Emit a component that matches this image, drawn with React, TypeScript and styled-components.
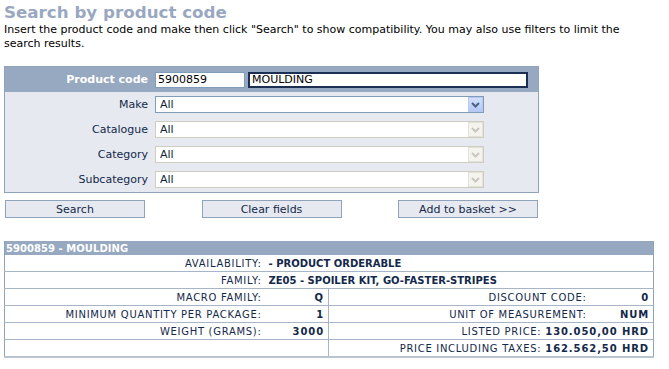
import styled, { createGlobalStyle } from "styled-components";

const GlobalStyle = createGlobalStyle`
    body {
        margin: 0;
        background: #ffffff;
        font-family: "DejaVu Sans", Verdana, sans-serif;
        color: #0e1f3c;
    }
`

const Page = styled.div`
    padding: 0 4px;
    width: 650px;
`

const Title = styled.h1`
    margin: 0;
    padding-top: 1px;
    font-size: 16.7px;
    line-height: 22px;
    font-weight: bold;
    color: #99a8c0;
`

const Intro = styled.p`
    margin: 0;
    font-size: 11px;
    line-height: 14px;
    color: #000;
    width: 640px;
`

const FormPanel = styled.div`
    margin-top: 15px;
    width: 533px;
    border: 1px solid #8fa3bd;
    background: #e6eaf0;
`

const FormRow = styled.div<{ $head?: boolean }>`
    display: grid;
    grid-template-columns: 150px 1fr;
    align-items: center;
    height: 25px;
    background: ${p => (p.$head ? "#97a8c1" : "transparent")};
`

const Label = styled.label<{ $head?: boolean }>`
    text-align: right;
    padding-right: 7px;
    font-size: 11px;
    font-weight: ${p => (p.$head ? "bold" : "normal")};
    color: ${p => (p.$head ? "#ffffff" : "#13284a")};
`

const Inputs = styled.div`
    display: flex;
    gap: 3px;
`

const TextField = styled.input<{ $w: number; $focus?: boolean }>`
    box-sizing: border-box;
    width: ${p => p.$w}px;
    height: 16px;
    padding: 0 2px;
    font-family: "DejaVu Sans", Verdana, sans-serif;
    font-size: 11px;
    color: #000;
    background: #fff;
    border: ${p => (p.$focus ? "2px solid #1a2f52" : "1px solid #7f9db9")};
    outline: none;
`

const SelectBox = styled.div<{ $disabled?: boolean }>`
    position: relative;
    box-sizing: border-box;
    width: 329px;
    height: 17px;
    background: #fff;
    border: 1px solid ${p => (p.$disabled ? "#cfcdbf" : "#7f9db9")};
`

const NativeSelect = styled.select`
    appearance: none;
    display: block;
    box-sizing: border-box;
    width: 100%;
    height: 15px;
    line-height: 15px;
    border: 0;
    padding: 0 0 0 4px;
    margin: 0;
    background: transparent;
    font-family: "DejaVu Sans", Verdana, sans-serif;
    font-size: 11px;
    color: #0e1f3c;
    outline: none;
    &:disabled {
        opacity: 1;
        color: #0e1f3c;
    }
`

const ArrowButton = styled.div<{ $disabled?: boolean }>`
    position: absolute;
    top: 0;
    right: 0;
    width: 15px;
    height: 15px;
    box-sizing: border-box;
    display: flex;
    align-items: center;
    justify-content: center;
    pointer-events: none;
    border: 1px solid ${p => (p.$disabled ? "#e3e2da" : "#b7c9f0")};
    background: ${p => (p.$disabled ? "#f4f3ee" : "linear-gradient(#d3e0fd, #b4c9f7)")};
`

const ButtonBar = styled.div`
    width: 533px;
    margin-top: 7px;
    padding: 0 1px;
    display: flex;
    justify-content: space-between;
`

const Button = styled.button`
    width: 140px;
    height: 18px;
    padding: 0;
    border: 1px solid #8fa3bd;
    background: #e6eaf0;
    font-family: "DejaVu Sans", Verdana, sans-serif;
    font-size: 11px;
    color: #13284a;
    cursor: pointer;
`

const Result = styled.table`
    margin-top: 23px;
    width: 649px;
    border-collapse: collapse;
    table-layout: fixed;
    border-left: 1px solid #8fa3bd;
    border-right: 1px solid #8fa3bd;
    border-bottom: 2px solid #b9c3d1;
    font-size: 10px;
`

const HeadCell = styled.th`
    text-align: left;
    height: 14px;
    padding: 0 0 0 1px;
    background: #97a8c1;
    color: #fff;
    font-weight: bold;
    letter-spacing: 0.05px;
`

const Cell = styled.td<{ $bold?: boolean; $wide?: boolean; $divider?: boolean }>`
    height: 16px;
    padding: 0 4px 0 3px;
    border-bottom: 1px solid #a7b5c9;
    border-right: ${p => (p.$divider ? "1px solid #a7b5c9" : "0")};
    text-align: ${p => (p.$wide ? "left" : "right")};
    font-weight: ${p => (p.$bold ? "bold" : "normal")};
    letter-spacing: ${p => (p.$wide ? "0" : p.$bold ? "0.9px" : "0.7px")};
    color: #13284a;
    white-space: nowrap;
`

const Strong = styled.b`
    letter-spacing: 0.9px;
`

const Chevron: React.FC<{ color: string }> = ({ color }) => (
    <svg width="9" height="6" viewBox="0 0 9 6">
        <path d="M1 1 L4.5 4.5 L8 1" fill="none" stroke={color} strokeWidth="2" />
    </svg>
)

const selects = [
    { label: "Make", disabled: false },
    { label: "Catalogue", disabled: true },
    { label: "Category", disabled: true },
    { label: "Subcategory", disabled: true },
]

const App: React.FC = () => {
    return (
        <>
            <GlobalStyle />
            <Page>
                <Title>Search by product code</Title>
                <Intro>
                    Insert the product code and make then click "Search" to show compatibility. You may also use filters to limit the search results.
                </Intro>

                <FormPanel>
                    <FormRow $head>
                        <Label $head>Product code</Label>
                        <Inputs>
                            <TextField $w={90} defaultValue="5900859" />
                            <TextField $w={280} $focus defaultValue="MOULDING" />
                        </Inputs>
                    </FormRow>
                    {selects.map(s => (
                        <FormRow key={s.label}>
                            <Label>{s.label}</Label>
                            <SelectBox $disabled={s.disabled}>
                                <NativeSelect disabled={s.disabled}>
                                    <option>All</option>
                                </NativeSelect>
                                <ArrowButton $disabled={s.disabled}>
                                    <Chevron color={s.disabled ? "#c8c7be" : "#4d6185"} />
                                </ArrowButton>
                            </SelectBox>
                        </FormRow>
                    ))}
                </FormPanel>

                <ButtonBar>
                    <Button>Search</Button>
                    <Button>Clear fields</Button>
                    <Button>Add to basket &gt;&gt;</Button>
                </ButtonBar>

                <Result>
                    <colgroup>
                        <col style={{ width: 261 }} />
                        <col style={{ width: 63 }} />
                        <col style={{ width: 262 }} />
                        <col style={{ width: 63 }} />
                    </colgroup>
                    <thead>
                        <tr>
                            <HeadCell colSpan={4}>5900859 - MOULDING</HeadCell>
                        </tr>
                    </thead>
                    <tbody>
                        <tr>
                            <Cell>AVAILABILITY:</Cell>
                            <Cell colSpan={3} $bold $wide>- PRODUCT ORDERABLE</Cell>
                        </tr>
                        <tr>
                            <Cell>FAMILY:</Cell>
                            <Cell colSpan={3} $bold $wide>ZE05 - SPOILER KIT, GO-FASTER-STRIPES</Cell>
                        </tr>
                        <tr>
                            <Cell>MACRO FAMILY:</Cell>
                            <Cell $bold $divider>Q</Cell>
                            <Cell>DISCOUNT CODE:</Cell>
                            <Cell $bold>0</Cell>
                        </tr>
                        <tr>
                            <Cell>MINIMUM QUANTITY PER PACKAGE:</Cell>
                            <Cell $bold $divider>1</Cell>
                            <Cell>UNIT OF MEASUREMENT:</Cell>
                            <Cell $bold>NUM</Cell>
                        </tr>
                        <tr>
                            <Cell>WEIGHT (GRAMS):</Cell>
                            <Cell $bold $divider>3000</Cell>
                            <Cell colSpan={2}>LISTED PRICE: <Strong>130.050,00 HRD</Strong></Cell>
                        </tr>
                        <tr>
                            <Cell></Cell>
                            <Cell $divider></Cell>
                            <Cell colSpan={2}>PRICE INCLUDING TAXES: <Strong>162.562,50 HRD</Strong></Cell>
                        </tr>
                    </tbody>
                </Result>
            </Page>
        </>
    );
};

export default App;
